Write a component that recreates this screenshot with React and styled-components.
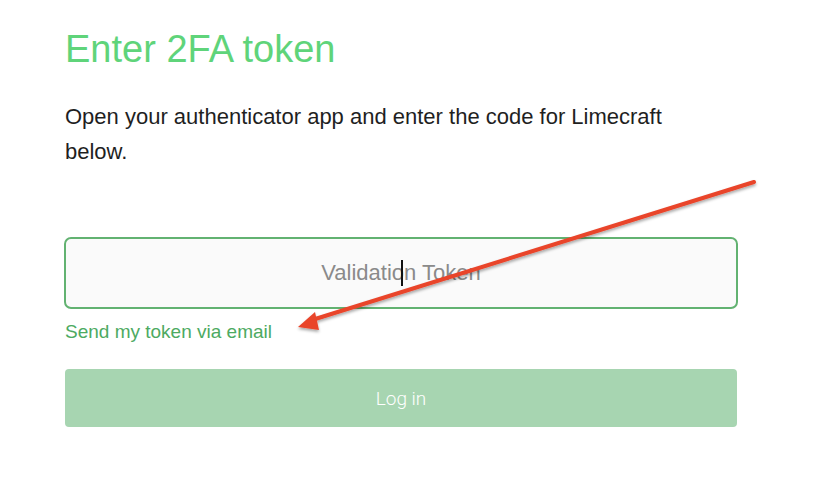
import React, { useState } from "react";
import styled, { createGlobalStyle } from "styled-components";

const GlobalStyle = createGlobalStyle`
  html, body {
    margin: 0;
    padding: 0;
    background: #ffffff;
  }
  body {
    font-family: "Liberation Sans", Arial, sans-serif;
  }
`;

const Page = styled.div`
  position: relative;
  width: 830px;
  height: 498px;
  overflow: hidden;
  background: #ffffff;
`;

const Wrapper = styled.div`
  width: 674px;
  padding: 27px 0 0 64px;
  display: flex;
  flex-direction: column;
`;

const Title = styled.h1`
  margin: 0;
  font-size: 38px;
  font-weight: 400;
  line-height: 44px;
  color: #5fd47a;
  padding-left: 1px;
`;

const Text = styled.p`
  margin: 28px 0 0;
  padding-left: 1px;
  max-width: 640px;
  font-size: 22px;
  line-height: 35px;
  color: #1f1f1f;
`;

const Form = styled.form`
  display: flex;
  flex-direction: column;
  margin-top: 68px;
`;

const Field = styled.div`
  position: relative;
  display: flex;
`;

const Input = styled.input`
  box-sizing: border-box;
  width: 675px;
  height: 72px;
  border: 2px solid #62b271;
  border-radius: 7px;
  background: #fafafa;
  font-family: "Liberation Sans", Arial, sans-serif;
  font-size: 22px;
  text-align: center;
  color: #333;
  outline: none;
  caret-color: transparent;

  &::placeholder {
    color: #8a8a8a;
  }
`;

// text cursor drawn over the empty field
const Caret = styled.span`
  position: absolute;
  left: 337px;
  top: 23px;
  width: 2px;
  height: 26px;
  background: #111;
  display: ${(p) => (p.$show ? "block" : "none")};
`;

const Link = styled.a`
  margin-top: 12px;
  padding-left: 1px;
  font-size: 19px;
  line-height: 22px;
  color: #4daa62;
  text-decoration: none;
  cursor: pointer;
`;

const Button = styled.button`
  box-sizing: border-box;
  margin-top: 26px;
  margin-left: 1px;
  width: 672px;
  height: 58px;
  border: none;
  border-radius: 4px;
  background: #a7d5b1;
  color: #ffffff;
  font-family: Roboto, "Liberation Sans", sans-serif;
  font-size: 19px;
  font-weight: 300;
  cursor: not-allowed;
`;

const Arrow = styled.svg`
  position: absolute;
  left: 0;
  top: 0;
  pointer-events: none;
`;

const PointerArrow = () => (
  <Arrow width="830" height="498" viewBox="0 0 830 498">
    <defs>
      <filter id="arrowShadow" x="-10%" y="-10%" width="120%" height="130%">
        <feDropShadow dx="0" dy="2" stdDeviation="1.6" floodColor="#000" floodOpacity="0.35" />
      </filter>
    </defs>
    <g filter="url(#arrowShadow)">
      <line x1="754" y1="182" x2="312" y2="320" stroke="#e9442b" strokeWidth="4" strokeLinecap="round" />
      <polygon points="298,327 315,312 319,330" fill="#e9442b" />
    </g>
  </Arrow>
);

const App = () => {
  const [token, setToken] = useState("");

  return (
    <Page>
      <GlobalStyle />
      <Wrapper>
        <Title>Enter 2FA token</Title>
        <Text>
          Open your authenticator app and enter the code for Limecraft below.
        </Text>
        <Form onSubmit={(e) => e.preventDefault()}>
          <Field>
            <Input
              autoFocus
              placeholder="Validation Token"
              value={token}
              onChange={(e) => setToken(e.target.value)}
            />
            <Caret $show={!token} />
          </Field>
          <Link href="#">Send my token via email</Link>
          <Button type="submit" disabled={!token}>
            Log in
          </Button>
        </Form>
      </Wrapper>
      <PointerArrow />
    </Page>
  );
};

export default App;
